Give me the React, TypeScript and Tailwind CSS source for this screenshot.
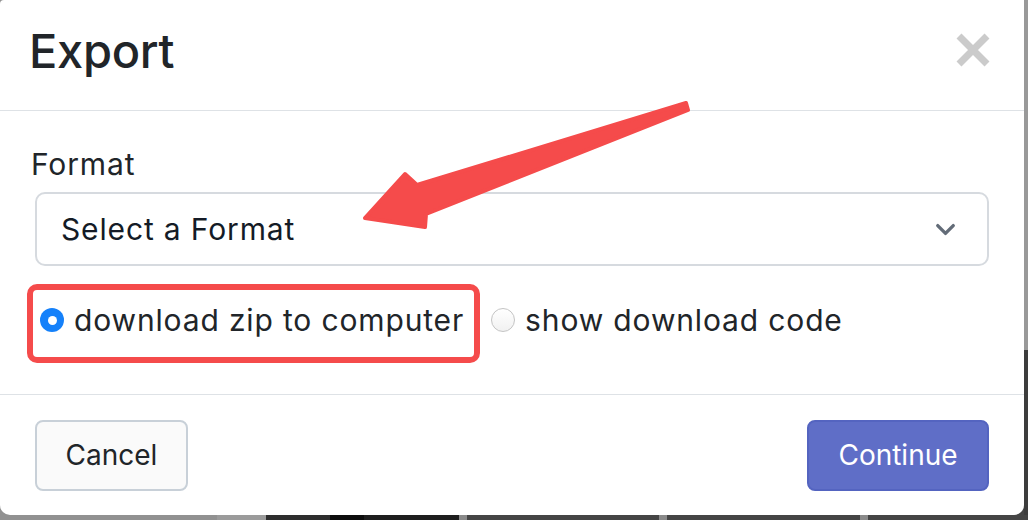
import { ChevronDown } from "lucide-react";

const strip: [string, string][] = [
  ["w-[217px]", "bg-[#919191]"],
  ["w-[49px]", "bg-[#9b9b9b]"],
  ["w-[64px]", "bg-[#2e2e2e]"],
  ["w-[34px]", "bg-[#0d0d0d]"],
  ["w-[95px]", "bg-[#1e1e1e]"],
  ["w-[8px]", "bg-[#8a8a8a]"],
  ["w-[192px]", "bg-[#454545]"],
  ["w-[8px]", "bg-[#8a8a8a]"],
  ["w-[193px]", "bg-[#454545]"],
  ["w-[8px]", "bg-[#8a8a8a]"],
  ["w-[160px]", "bg-[#454545]"],
];

function CloseIcon() {
  return (
    <svg width="38" height="38" viewBox="0 0 38 38">
      <path d="M5 5 L33 33 M33 5 L5 33" stroke="#cbcbcb" strokeWidth="7" />
    </svg>
  );
}

function RedArrow() {
  return (
    <svg className="absolute inset-0 pointer-events-none" width="1024" height="515">
      <polygon
        points="686,103 688,110 426,214 425,227 365,218 405,174 417,185"
        fill="#f54b4b"
        stroke="#f54b4b"
        strokeWidth="4"
        strokeLinejoin="round"
      />
    </svg>
  );
}

export default function App() {
  return (
    <div className="w-[1028px] h-[520px] flex flex-col bg-[#454545] font-['Inter','Liberation_Sans',sans-serif] text-[#212529]">
      <div className="flex h-[515px] bg-[linear-gradient(to_right,#919191_50%,#454545_50%)]">
        <div className="relative w-[1024px] flex flex-col bg-white rounded-b-[10px] rounded-tl-[4px]">
          <div className="h-[111px] flex items-start justify-between border-b border-[#dee2e6] pl-[29px] pr-[32px]">
            <h1 className="mt-[23px] text-[47px] leading-[56px] font-medium tracking-[-0.3px]">Export</h1>
            <button className="mt-[31px]">
              <CloseIcon />
            </button>
          </div>

          <div className="h-[283px] px-[35px] pt-[35px] tracking-[0.85px]">
            <label className="block -ml-[4px] text-[30px] leading-[36px]">Format</label>
            <div className="mt-[10px] h-[74px] flex items-center justify-between border-2 border-[#d6dadf] rounded-[10px] pl-[24px] pr-[26px]">
              <span className="text-[30px] leading-[36px] text-[#141b26]">Select a Format</span>
              <ChevronDown size={31} strokeWidth={2.6} color="#636c78" />
            </div>

            <div className="mt-[18px] -ml-[8px] flex items-center">
              <div className="h-[79px] flex items-center border-[6px] border-[#f54b4b] rounded-[10px] pl-[7px] pr-[10px] pb-[7px]">
                <span className="w-[24px] h-[24px] rounded-full bg-[#1581fa] flex items-center justify-center">
                  <span className="w-[9px] h-[9px] rounded-full bg-white" />
                </span>
                <span className="ml-[10px] text-[30px] leading-[36px]">download zip to computer</span>
              </div>
              <div className="flex items-center pb-[7px]">
                <span className="ml-[11px] w-[24px] h-[24px] rounded-full border border-[#c4c4c4] bg-[linear-gradient(#ffffff,#f1f1f1)]" />
                <span className="ml-[10px] text-[30px] leading-[36px]">show download code</span>
              </div>
            </div>
          </div>

          <div className="flex-1 flex items-center justify-between border-t border-[#dee2e6] px-[35px]">
            <button className="w-[153px] h-[71px] rounded-[8px] border-2 border-[#c8d0d8] bg-[#fafafa] text-[28px] text-[#212529]">
              Cancel
            </button>
            <button className="w-[182px] h-[71px] rounded-[8px] border-2 border-[#5464c0] bg-[#5f6ec7] text-[28px] text-white">
              Continue
            </button>
          </div>

          <RedArrow />
        </div>
        <div className="w-[4px] flex flex-col">
          <div className="h-[350px] bg-[#999999]" />
          <div className="flex-1 bg-[#3d3d3d]" />
        </div>
      </div>
      <div className="h-[5px] flex">
        {strip.map(([w, c], i) => (
          <div key={i} className={`${w} ${c} h-full`} />
        ))}
      </div>
    </div>
  );
}
